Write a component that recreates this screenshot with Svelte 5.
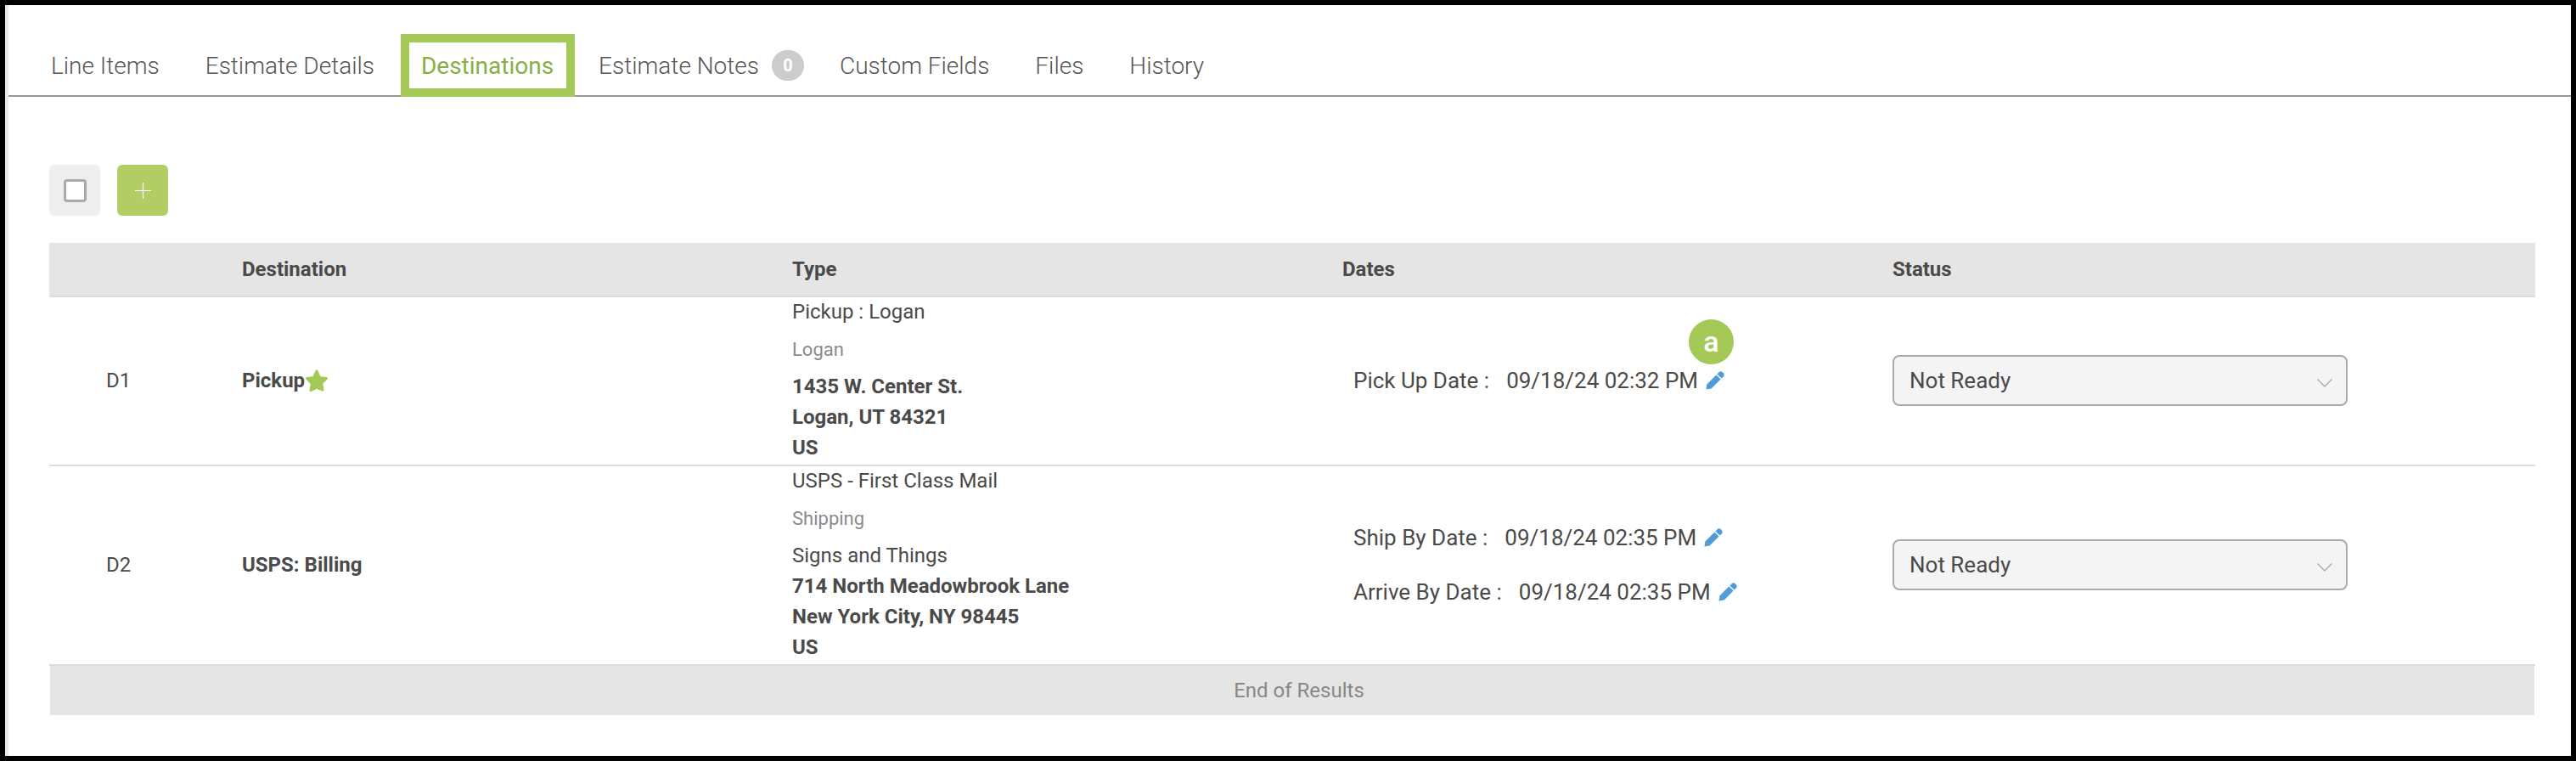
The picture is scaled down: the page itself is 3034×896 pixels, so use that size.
<script>
  const tabs = [
    { label: 'Line Items' },
    { label: 'Estimate Details' },
    { label: 'Destinations', active: true },
    { label: 'Estimate Notes', count: 0 },
    { label: 'Custom Fields' },
    { label: 'Files' },
    { label: 'History' }
  ];
</script>

{#snippet pencil()}
  <svg class="pencil" viewBox="0 0 22 22" aria-hidden="true">
    <path d="M.5 21.500 1.400 15.400 12.400 4.400 17.600 9.600 6.600 20.600zM13.400 3.400l2.200-2.200c1.200-1.200 3-1.200 4.200 0l1 1c1.200 1.200 1.200 3 0 4.200L18.600 8.600z" fill="#4f9cd9" />
  </svg>
{/snippet}

{#snippet select()}
  <div class="select">
    <span>Not Ready</span>
    <svg viewBox="0 0 18 10" class="chev" aria-hidden="true"><path d="M.5 .5 9 9 17.500 .5" fill="none" stroke="#aaa" stroke-width="1.400" /></svg>
  </div>
{/snippet}

<div class="page">
<div class="frame">
  <nav class="tabs">
    {#each tabs as t}
      <div class="tab" class:active={t.active}>
        {t.label}
        {#if t.count !== undefined}<span class="count">{t.count}</span>{/if}
      </div>
    {/each}
  </nav>

  <div class="content">
    <div class="toolbar">
      <div class="tool grey"><span class="check"></span></div>
      <div class="tool green">
        <svg viewBox="0 0 20 20" class="plus" aria-hidden="true"><path d="M10 0v20M0 10h20" stroke="#fff" stroke-width="1.300" /></svg>
      </div>
    </div>

    <div class="table">
      <div class="row head">
        <div></div>
        <div class="b">Destination</div>
        <div class="b">Type</div>
        <div class="b">Dates</div>
        <div class="b">Status</div>
      </div>

      <div class="row r1">
        <div class="id">D1</div>
        <div class="b name">Pickup<svg class="star" viewBox="0 0 24 24" aria-hidden="true"><path d="M12 .3c.6 0 1 .4 1.300 1l2.900 6.200 6.500.9c1.200.2 1.600 1.500.8 2.300l-4.800 4.800 1.200 6.500c.2 1.200-1 2-2.100 1.500L12 20.900l-5.800 3.100c-1.100.5-2.300-.3-2.100-1.500l1.200-6.500L.5 10.700c-.8-.8-.4-2.100.8-2.300l6.500-.9 2.900-6.200c.3-.6.700-1 1.300-1z" fill="#a5c957" /></svg></div>
        <div class="type">
          <div class="l">Pickup : Logan</div>
          <div class="sub">Logan</div>
          <div class="addr b">1435 W. Center St.</div>
          <div class="addr b">Logan, UT 84321</div>
          <div class="addr b">US</div>
        </div>
        <div class="dates">
          <div class="date"><span class="dl">Pick Up Date :</span><span>09/18/24 02:32 PM</span>{@render pencil()}<span class="marker">a</span></div>
        </div>
        <div class="status">{@render select()}</div>
      </div>

      <div class="row r2">
        <div class="id">D2</div>
        <div class="b name">USPS: Billing</div>
        <div class="type">
          <div class="l">USPS - First Class Mail</div>
          <div class="sub">Shipping</div>
          <div class="addr">Signs and Things</div>
          <div class="addr b">714 North Meadowbrook Lane</div>
          <div class="addr b">New York City, NY 98445</div>
          <div class="addr b">US</div>
        </div>
        <div class="dates two">
          <div class="date"><span class="dl">Ship By Date :</span><span>09/18/24 02:35 PM</span>{@render pencil()}</div>
          <div class="date"><span class="dl">Arrive By Date :</span><span>09/18/24 02:35 PM</span>{@render pencil()}</div>
        </div>
        <div class="status">{@render select()}</div>
      </div>

      <div class="end">End of Results</div>
    </div>
  </div>
</div>
</div>

<style>
  :global(body) {
    margin: 0;
    background: #000;
  }
  .page {
    box-sizing: border-box;
    height: 896px;
    padding: 6px;
    overflow: hidden;
    background: #000;
  }
  .frame {
    box-sizing: border-box;
    height: 884px;
    border-left: 4px solid #e8e8e8;
    background: #fff;
    font-family: Roboto, "Liberation Sans", sans-serif;
    font-size: 24px;
    color: #4a4a4a;
  }
  .tabs {
    display: flex;
    align-items: stretch;
    box-sizing: border-box;
    height: 108px;
    padding: 34px 0 0 23px;
    border-bottom: 2px solid #999;
  }
  .tab {
    display: flex;
    align-items: center;
    gap: 15px;
    padding: 0 27px;
    height: 74px;
    font-size: 28px;
    font-weight: 300;
    color: #555;
  }
  .tab.active {
    box-sizing: border-box;
    margin: 0 1px 0 4px;
    padding: 0 15px 0 14px;
    border: 10px solid #a5c957;
    font-weight: 400;
    color: #8aae45;
  }
  .count {
    display: flex;
    align-items: center;
    justify-content: center;
    width: 38px;
    height: 36px;
    margin-right: -12px;
    border-radius: 18px;
    background: #ccc;
    color: #fff;
    font-size: 20px;
    font-weight: 700;
  }
  .content {
    padding: 80px 42px 0 48px;
  }
  .toolbar {
    display: flex;
    gap: 20px;
    margin-bottom: 32px;
  }
  .tool {
    display: flex;
    align-items: center;
    justify-content: center;
    width: 60px;
    height: 60px;
    border-radius: 6px;
  }
  .grey { background: #eee; }
  .green { background: #b2cd63; }
  .check {
    box-sizing: border-box;
    width: 27px;
    height: 27px;
    border: 3px solid #aaa;
    border-radius: 4px;
    background: #fff;
  }
  .plus { width: 19px; height: 19px; }
  .row {
    display: grid;
    grid-template-columns: 227px 648px 648px 648px 1fr;
    align-items: center;
    border-bottom: 2px solid #ddd;
  }
  .head {
    height: 64px;
    background: #e5e5e5;
    box-sizing: border-box;
  }
  .b { font-weight: 700; }
  .r1 { height: 199px; box-sizing: border-box; }
  .r2 { height: 235px; box-sizing: border-box; }
  .id { padding: 0 0 2px 67px; }
  .name {
    display: flex;
    align-items: center;
    padding-bottom: 2px;
  }
  .star { width: 26px; height: 26px; margin-left: 1px; }
  .type {
    align-self: start;
    padding-top: 1px;
  }
  .l { line-height: 32px; }
  .sub {
    font-size: 22px;
    color: #8a8a8a;
    line-height: 32px;
    margin: 13px 0 9px;
  }
  .addr {
    line-height: 36px;
  }
  .dates {
    padding: 0 0 2px 13px;
    font-size: 26px;
  }
  .dates.two {
    display: flex;
    flex-direction: column;
    gap: 32px;
  }
  .date {
    position: relative;
    display: flex;
    align-items: center;
    height: 32px;
  }
  .dl { margin-right: 20px; }
  .pencil { width: 22px; height: 22px; margin-left: 9px; }
  .marker {
    position: absolute;
    left: 395px;
    top: -56px;
    width: 53px;
    height: 53px;
    border-radius: 50%;
    background: #a5c957;
    color: #fff;
    font-size: 34px;
    font-weight: 500;
    line-height: 50px;
    display: flex;
    align-items: center;
    justify-content: center;
  }
  .status {
    padding-bottom: 1px;
  }
  .select {
    box-sizing: border-box;
    display: flex;
    align-items: center;
    justify-content: space-between;
    width: 536px;
    height: 60px;
    padding: 0 16px 0 18px;
    border: 2px solid #aaa;
    border-radius: 8px;
    background: #f4f4f4;
    font-size: 26px;
  }
  .chev { width: 18px; height: 10px; margin-top: 5px; }
  .end {
    margin: 0 1px;
    padding-left: 16px;
    height: 58px;
    background: #e5e5e5;
    color: #888;
    display: flex;
    align-items: center;
    justify-content: center;
  }
</style>
